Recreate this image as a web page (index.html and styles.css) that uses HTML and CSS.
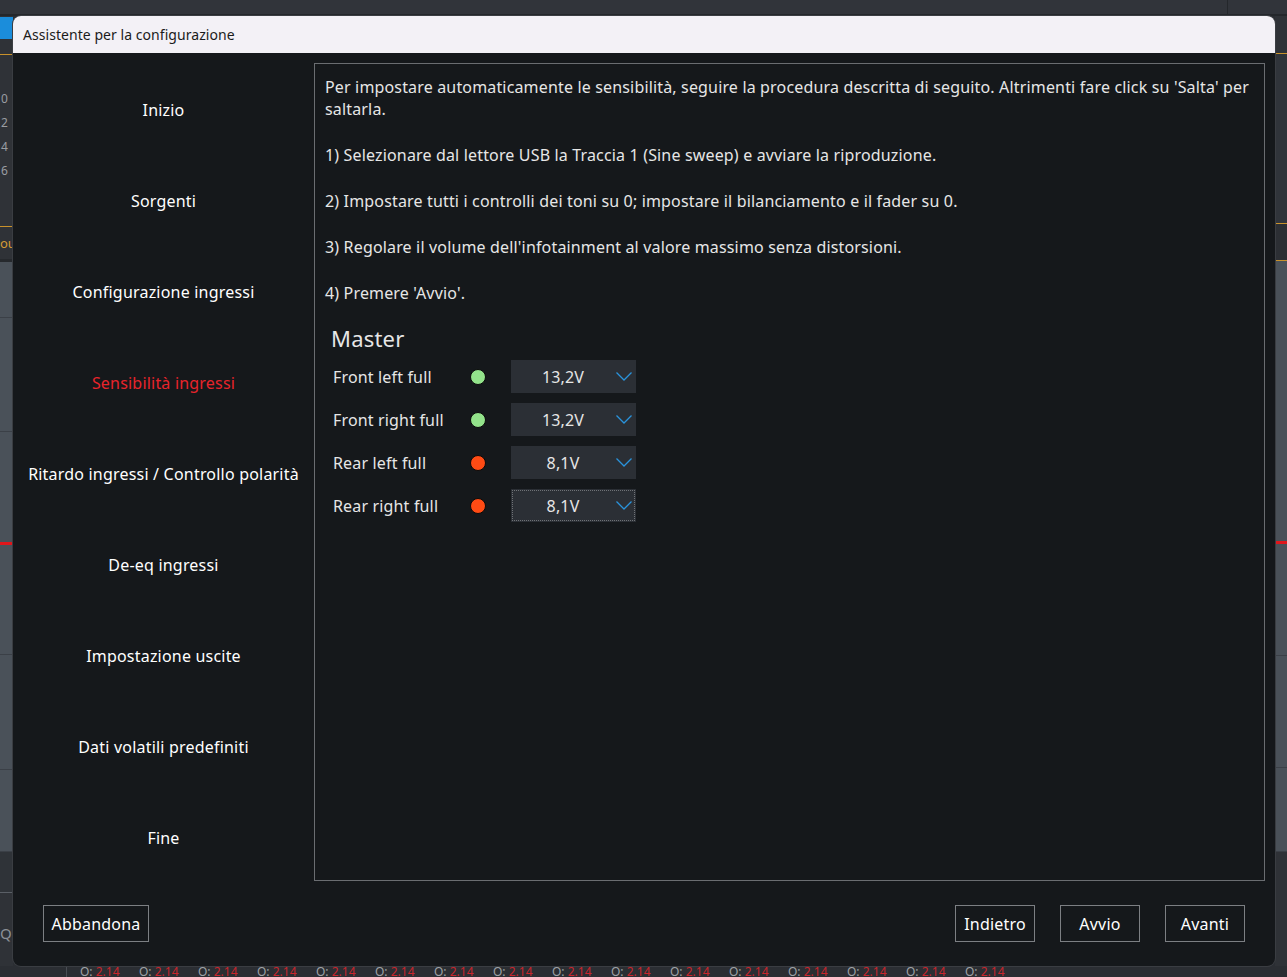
FILE: index.html
```html
<!DOCTYPE html>
<html lang="it">
<head>
<meta charset="utf-8">
<title>Assistente per la configurazione</title>
<link rel="stylesheet" href="styles.css">
</head>
<body>
<div class="app">
  <div class="app-top">
    <div class="top-seg"></div>
    <div class="top-seg2"></div>
  </div>
  <div class="app-mid">
    <div class="side-left">
      <div class="blue-tab"></div>
      <div class="scale">
        <span>0</span><span>2</span><span>4</span><span>6</span>
      </div>
      <div class="out-label">out</div>
      <div class="lpanel p56"></div>
      <div class="lpanel p114"></div>
      <div class="lpanel p223 red-mark"></div>
      <div class="lpanel p115"></div>
      <div class="lpanel p82"></div>
      <div class="lpanel dark"></div>
      <div class="lq">Q</div>
    </div>
    <div class="center"></div>
    <div class="side-right">
      <div class="r-orange"></div>
      <div class="r-orange2"></div>
      <div class="lpanel p395 red-mark-r"></div>
      <div class="lpanel p112"></div>
      <div class="lpanel p84"></div>
    </div>
  </div>
  <div class="app-bottom">
    <div class="q-list">
      <span class="q">O: <b>2.14</b></span><span class="q">O: <b>2.14</b></span><span class="q">O: <b>2.14</b></span><span class="q">O: <b>2.14</b></span><span class="q">O: <b>2.14</b></span><span class="q">O: <b>2.14</b></span><span class="q">O: <b>2.14</b></span><span class="q">O: <b>2.14</b></span><span class="q">O: <b>2.14</b></span><span class="q">O: <b>2.14</b></span><span class="q">O: <b>2.14</b></span><span class="q">O: <b>2.14</b></span><span class="q">O: <b>2.14</b></span><span class="q">O: <b>2.14</b></span><span class="q">O: <b>2.14</b></span><span class="q">O: <b>2.14</b></span>
    </div>
  </div>
</div>

<div class="dialog">
  <div class="titlebar">Assistente per la configurazione</div>
  <div class="dlg-body">
    <nav class="steps">
      <div class="step">Inizio</div>
      <div class="step">Sorgenti</div>
      <div class="step">Configurazione ingressi</div>
      <div class="step active">Sensibilità ingressi</div>
      <div class="step">Ritardo ingressi / Controllo polarità</div>
      <div class="step">De-eq ingressi</div>
      <div class="step">Impostazione uscite</div>
      <div class="step">Dati volatili predefiniti</div>
      <div class="step">Fine</div>
    </nav>
    <section class="panel">
      <p>Per impostare automaticamente le sensibilità, seguire la procedura descritta di seguito. Altrimenti fare click su 'Salta' per saltarla.</p>
      <p>1) Selezionare dal lettore USB la Traccia 1 (Sine sweep) e avviare la riproduzione.</p>
      <p>2) Impostare tutti i controlli dei toni su 0; impostare il bilanciamento e il fader su 0.</p>
      <p>3) Regolare il volume dell'infotainment al valore massimo senza distorsioni.</p>
      <p>4) Premere 'Avvio'.</p>
      <div class="master">
        <h2>Master</h2>
        <div class="rows">
          <div class="row">
            <span class="lbl">Front left full</span>
            <span class="dot ok"></span>
            <div class="select"><span class="val">13,2V</span><svg class="chev" viewBox="0 0 16 9"><path d="M0.5 0.5 L8 8 L15.5 0.5"/></svg></div>
          </div>
          <div class="row">
            <span class="lbl">Front right full</span>
            <span class="dot ok"></span>
            <div class="select"><span class="val">13,2V</span><svg class="chev" viewBox="0 0 16 9"><path d="M0.5 0.5 L8 8 L15.5 0.5"/></svg></div>
          </div>
          <div class="row">
            <span class="lbl">Rear left full</span>
            <span class="dot bad"></span>
            <div class="select"><span class="val">8,1V</span><svg class="chev" viewBox="0 0 16 9"><path d="M0.5 0.5 L8 8 L15.5 0.5"/></svg></div>
          </div>
          <div class="row">
            <span class="lbl">Rear right full</span>
            <span class="dot bad"></span>
            <div class="select focused"><span class="val">8,1V</span><svg class="chev" viewBox="0 0 16 9"><path d="M0.5 0.5 L8 8 L15.5 0.5"/></svg></div>
          </div>
        </div>
      </div>
    </section>
  </div>
  <div class="footer">
    <button class="btn wide">Abbandona</button>
    <div class="btn-group">
      <button class="btn">Indietro</button>
      <button class="btn">Avvio</button>
      <button class="btn">Avanti</button>
    </div>
  </div>
</div>
</body>
</html>
```

FILE: styles.css
```css
* { box-sizing: border-box; }
html, body {
  margin: 0;
  padding: 0;
  width: 1287px;
  height: 977px;
  overflow: hidden;
  background: #2b2e33;
  font-family: "Segoe UI", "Noto Sans", "Open Sans", sans-serif;
}

/* ---------- background application ---------- */
.app {
  width: 1287px;
  height: 977px;
  display: flex;
  flex-direction: column;
}
.app-top {
  height: 16px;
  display: flex;
  background: #31343a;
  border-bottom: 2px solid #24272b;
  flex-shrink: 0;
}
.top-seg { width: 1228px; border-right: 1px solid #24272b; }
.top-seg2 { flex: 1; }
.app-mid {
  flex: 1;
  display: flex;
  min-height: 0;
}
.side-left {
  width: 13px;
  display: flex;
  flex-direction: column;
  background: #2f3237;
  color: #9a9da2;
  font-size: 12px;
  overflow: hidden;
}
.side-left > div { flex-shrink: 0; }
.blue-tab { height: 22px; background: #1b8ddb; margin-top: 1px; }
.scale {
  height: 173px;
  margin-top: 15px;
  border-top: 1px solid #c8912b;
  border-bottom: 1px solid #c8912b;
  display: flex;
  flex-direction: column;
  padding-top: 36px;
  gap: 8px;
  line-height: 16px;
  padding-left: 1px;
}
.out-label {
  height: 35px;
  color: #d39a35;
  font-size: 13px;
  line-height: 33px;
  border-bottom: 3px solid #26292d;
}
.lpanel {
  background: #4a5159;
  border-bottom: 1px solid #3b4047;
  position: relative;
  flex-shrink: 0;
}
.p56 { height: 56px; }
.p114 { height: 114px; }
.p223 { height: 223px; }
.p115 { height: 115px; }
.p82 { height: 82px; }
.p395 { height: 395px; }
.p112 { height: 112px; }
.p84 { height: 84px; }
.lpanel.dark { background: #2f3338; height: 41px; border-bottom: 1px solid #5a5f66; }
.red-mark::after, .red-mark-r::after {
  content: "";
  position: absolute;
  left: 0; right: 0;
  height: 3px;
  background: #e0161b;
}
.red-mark::after { top: 110px; }
.red-mark-r::after { top: 280px; }
.lq { color: #8c9096; font-size: 15px; padding-top: 30px; padding-left: 0; }
.center { flex: 1; }
.side-right {
  width: 12px;
  background: #2f3237;
  display: flex;
  flex-direction: column;
  overflow: hidden;
}
.r-orange {
  height: 171px;
  margin-top: 37px;
  border: 1px solid #c8912b;
  border-right: 0;
  background: #30343a;
  flex-shrink: 0;
}
.r-orange2 {
  height: 37px;
  border-bottom: 1px solid #c8912b;
  background: #2c2f34;
  flex-shrink: 0;
}
.app-bottom {
  height: 11px;
  background: #2b2e33;
  flex-shrink: 0;
}
.q-list {
  margin-left: 66px;
  border-left: 1px solid #4a4e54;
  padding-left: 13px;
  display: flex;
  font-size: 12px;
  line-height: 11px;
  height: 11px;
  overflow: hidden;
  white-space: nowrap;
}
.q { width: 59px; flex-shrink: 0; color: #9ea2a7; }
.q b { color: #c9252c; font-weight: normal; }

/* ---------- dialog ---------- */
.dialog {
  position: absolute;
  left: 13px;
  top: 16px;
  width: 1262px;
  height: 950px;
  border-radius: 8px;
  background: #15181b;
  box-shadow: 0 0 0 1px #3a3d42;
  overflow: hidden;
  display: flex;
  flex-direction: column;
}
.titlebar {
  height: 37px;
  background: #f3f1f6;
  color: #1b1b1b;
  font-size: 14px;
  line-height: 37px;
  padding-left: 10px;
  flex-shrink: 0;
  letter-spacing: 0.05px;
}
.dlg-body {
  height: 828px;
  display: flex;
  padding: 10px 10px 0 0;
  flex-shrink: 0;
}
.steps {
  width: 301px;
  flex-shrink: 0;
  display: grid;
  grid-template-rows: repeat(9, 1fr);
}
.step {
  display: flex;
  align-items: center;
  justify-content: center;
  color: #ffffff;
  font-size: 16px;
  letter-spacing: 0.2px;
  padding-top: 4px;
}
.step.active { color: #e8242b; }
.panel {
  flex: 1;
  border: 1px solid #6a6d71;
  padding: 12px 10px 0 10px;
  color: #e6e6e6;
  font-size: 16px;
  line-height: 22px;
  letter-spacing: 0.16px;
}
.panel p { margin: 0 0 24px 0; }
.master { padding-left: 6px; margin-top: -4px; }
.master h2 {
  margin: 0 0 8px 0;
  font-size: 22px;
  font-weight: normal;
  line-height: 28px;
  color: #e6e6e6;
  letter-spacing: 0.2px;
}
.rows { display: flex; flex-direction: column; gap: 10px; }
.row {
  display: grid;
  grid-template-columns: 137px 41px 125px;
  align-items: center;
  padding-left: 2px;
}
.lbl { color: #e6e6e6; font-size: 16px; }
.dot {
  width: 16px;
  height: 16px;
  border-radius: 50%;
  border: 1px solid #0a0a0a;
}
.dot.ok { background: #93e38b; }
.dot.bad { background: #ff4b14; }
.select {
  height: 33px;
  background: #2b2f35;
  display: flex;
  align-items: center;
}
.select.focused { outline: 1px dotted #6f7276; outline-offset: -2px; }
.val {
  width: 104px;
  text-align: center;
  color: #e6e6e6;
  font-size: 16px;
}
.chev {
  width: 16px;
  height: 9px;
  margin-left: 1px;
  fill: none;
  stroke: #2a93dc;
  stroke-width: 1.3;
}
.footer {
  flex: 1;
  display: flex;
  justify-content: space-between;
  align-items: flex-start;
  padding: 24px 30px 0 30px;
}
.btn-group { display: flex; gap: 25px; }
.btn {
  height: 37px;
  width: 80px;
  background: #15181b;
  border: 1px solid #7c7f83;
  color: #ffffff;
  font-family: inherit;
  font-size: 16px;
  letter-spacing: 0.2px;
  padding: 0;
}
.btn.wide { width: 106px; }
```
